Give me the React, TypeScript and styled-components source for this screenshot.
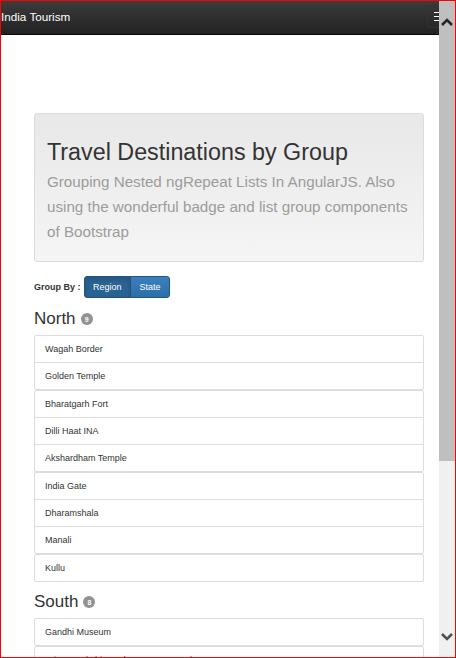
import React from "react";
import styled, { createGlobalStyle } from "styled-components";

const Global = createGlobalStyle`
  html, body { margin: 0; padding: 0; background: #fff; }
  body { font-family: "Liberation Sans", Arial, sans-serif; color: #333; overflow: hidden; }
  * { box-sizing: border-box; }
`;

const Page = styled.div`
  width: 456px;
  height: 658px;
  overflow: hidden;
  position: relative;
`;

const Frame = styled.div`
  position: fixed;
  inset: 0;
  border: 1px solid #ff0000;
  pointer-events: none;
  z-index: 10;
`;

const Navbar = styled.header`
  height: 35px;
  background: linear-gradient(to bottom, #3c3c3c 0%, #222 100%);
  border-bottom: 1px solid #080808;
  display: flex;
  align-items: center;
  justify-content: space-between;
  padding: 0 2px 0 1px;
`;

const Brand = styled.span`
  color: #fff;
  font-size: 11.7px;
  line-height: 14px;
  margin-top: -1px;
`;

const Toggle = styled.button`
  width: 27px;
  height: 22px;
  margin-top: -1px;
  border: 1px solid #333;
  border-radius: 3px;
  background: transparent;
  display: flex;
  flex-direction: column;
  align-items: center;
  justify-content: center;
  gap: 3px;
  padding: 0;
`;

const Bar = styled.span`
  display: block;
  width: 13px;
  height: 1.3px;
  background: #fff;
`;

const Main = styled.main`
  padding: 78px 32px 0 34px;
`;

const Jumbotron = styled.section`
  border: 1px solid #dcdcdc;
  border-radius: 3px;
  background: linear-gradient(to bottom, #e8e8e8 0%, #f5f5f5 100%);
  padding: 25px 12px 17px 12px;
`;

const Title = styled.h1`
  margin: 0 0 4px;
  font-weight: normal;
  font-size: 23.3px;
  line-height: 26px;
  color: #333;
`;

const Lead = styled.p`
  margin: 0;
  font-size: 15.2px;
  line-height: 25px;
  color: #9c9c9c;
`;

const GroupBy = styled.div`
  display: flex;
  align-items: center;
  gap: 3px;
  margin: 14px 0 11px;
`;

const GroupLabel = styled.span`
  font-size: 9px;
  font-weight: bold;
  color: #333;
`;

const BtnGroup = styled.div`
  display: flex;
`;

const Btn = styled.button<{ $active?: boolean; $first?: boolean; $last?: boolean }>`
  height: 22px;
  padding: 0 8.5px;
  font-family: "Liberation Sans", Arial, sans-serif;
  font-size: 9px;
  color: #fff;
  border: 1px solid #245580;
  margin-left: ${(p) => (p.$first ? "0" : "-1px")};
  border-radius: ${(p) =>
    p.$first ? "3px 0 0 3px" : p.$last ? "0 3px 3px 0" : "0"};
  background: ${(p) =>
    p.$active ? "#2a6293" : "linear-gradient(to bottom, #3a80bd 0%, #2d6ea8 100%)"};
  box-shadow: ${(p) => (p.$active ? "inset 0 2px 4px rgba(0,0,0,0.15)" : "none")};
`;

const Section = styled.section`
  margin-top: 10px;
`;

const Heading = styled.h3`
  margin: 0 0 6px;
  display: flex;
  align-items: center;
  font-weight: normal;
  font-size: 17px;
  line-height: 20px;
  color: #333;
`;

const Badge = styled.span`
  display: inline-flex;
  align-items: center;
  justify-content: center;
  width: 12px;
  height: 12px;
  margin-left: 5px;
  border-radius: 6px;
  background: #929292;
  color: #fff;
  font-size: 7px;
  font-weight: bold;
  line-height: 1;
`;

const ListGroup = styled.ul`
  margin: 0;
  padding: 0;
  list-style: none;
  border: 1px solid #ddd;
  border-radius: 2px;
`;

const Item = styled.li`
  height: 27px;
  padding: 0 10px;
  font-size: 9px;
  line-height: 26px;
  color: #333;
  border-bottom: 1px solid #ddd;
  &:last-child {
    height: 26px;
    border-bottom: none;
  }
`;

const Scrollbar = styled.div`
  position: fixed;
  top: 1px;
  right: 1px;
  bottom: 1px;
  width: 16px;
  background: #f0f0f0;
  z-index: 5;
`;

const Thumb = styled.div`
  position: absolute;
  top: 0;
  left: 0;
  right: 0;
  height: 460px;
  background: rgba(137, 137, 137, 0.47);
`;

const Arrow = styled.svg<{ $pos: "top" | "bottom" }>`
  position: absolute;
  left: 2px;
  ${(p) => (p.$pos === "top" ? "top: 16px;" : "bottom: 15px;")}
`;

const regions: { name: string; count: number; groups: string[][] }[] = [
  {
    name: "North",
    count: 9,
    groups: [
      ["Wagah Border", "Golden Temple"],
      ["Bharatgarh Fort", "Dilli Haat INA", "Akshardham Temple"],
      ["India Gate", "Dharamshala", "Manali"],
      ["Kullu"],
    ],
  },
  {
    name: "South",
    count: 8,
    groups: [
      ["Gandhi Museum"],
      ["Sri Meenakshi Sundareswarar Temple", "Mysore Palace"],
      ["Charminar"],
    ],
  },
];

export default function App() {
  return (
    <Page>
      <Global />
      <Navbar>
        <Brand>India Tourism</Brand>
        <Toggle aria-label="menu">
          <Bar />
          <Bar />
          <Bar />
        </Toggle>
      </Navbar>
      <Main>
        <Jumbotron>
          <Title>Travel Destinations by Group</Title>
          <Lead>
            Grouping Nested ngRepeat Lists In AngularJS. Also using the wonderful badge and list
            group components of Bootstrap
          </Lead>
        </Jumbotron>
        <GroupBy>
          <GroupLabel>Group By :</GroupLabel>
          <BtnGroup>
            <Btn $active $first>
              Region
            </Btn>
            <Btn $last>State</Btn>
          </BtnGroup>
        </GroupBy>
        {regions.map((r) => (
          <Section key={r.name}>
            <Heading>
              {r.name}
              <Badge>{r.count}</Badge>
            </Heading>
            {r.groups.map((g, i) => (
              <ListGroup key={i}>
                {g.map((it) => (
                  <Item key={it}>{it}</Item>
                ))}
              </ListGroup>
            ))}
          </Section>
        ))}
      </Main>
      <Scrollbar>
        <Thumb />
        <Arrow $pos="top" width="12" height="9" viewBox="0 0 12 9">
          <polyline points="1,8 6,3 11,8" fill="none" stroke="#262626" strokeWidth="2.6" />
        </Arrow>
        <Arrow $pos="bottom" width="12" height="9" viewBox="0 0 12 9">
          <polyline points="1,1 6,6 11,1" fill="none" stroke="#505050" strokeWidth="2.6" />
        </Arrow>
      </Scrollbar>
      <Frame />
    </Page>
  );
}
